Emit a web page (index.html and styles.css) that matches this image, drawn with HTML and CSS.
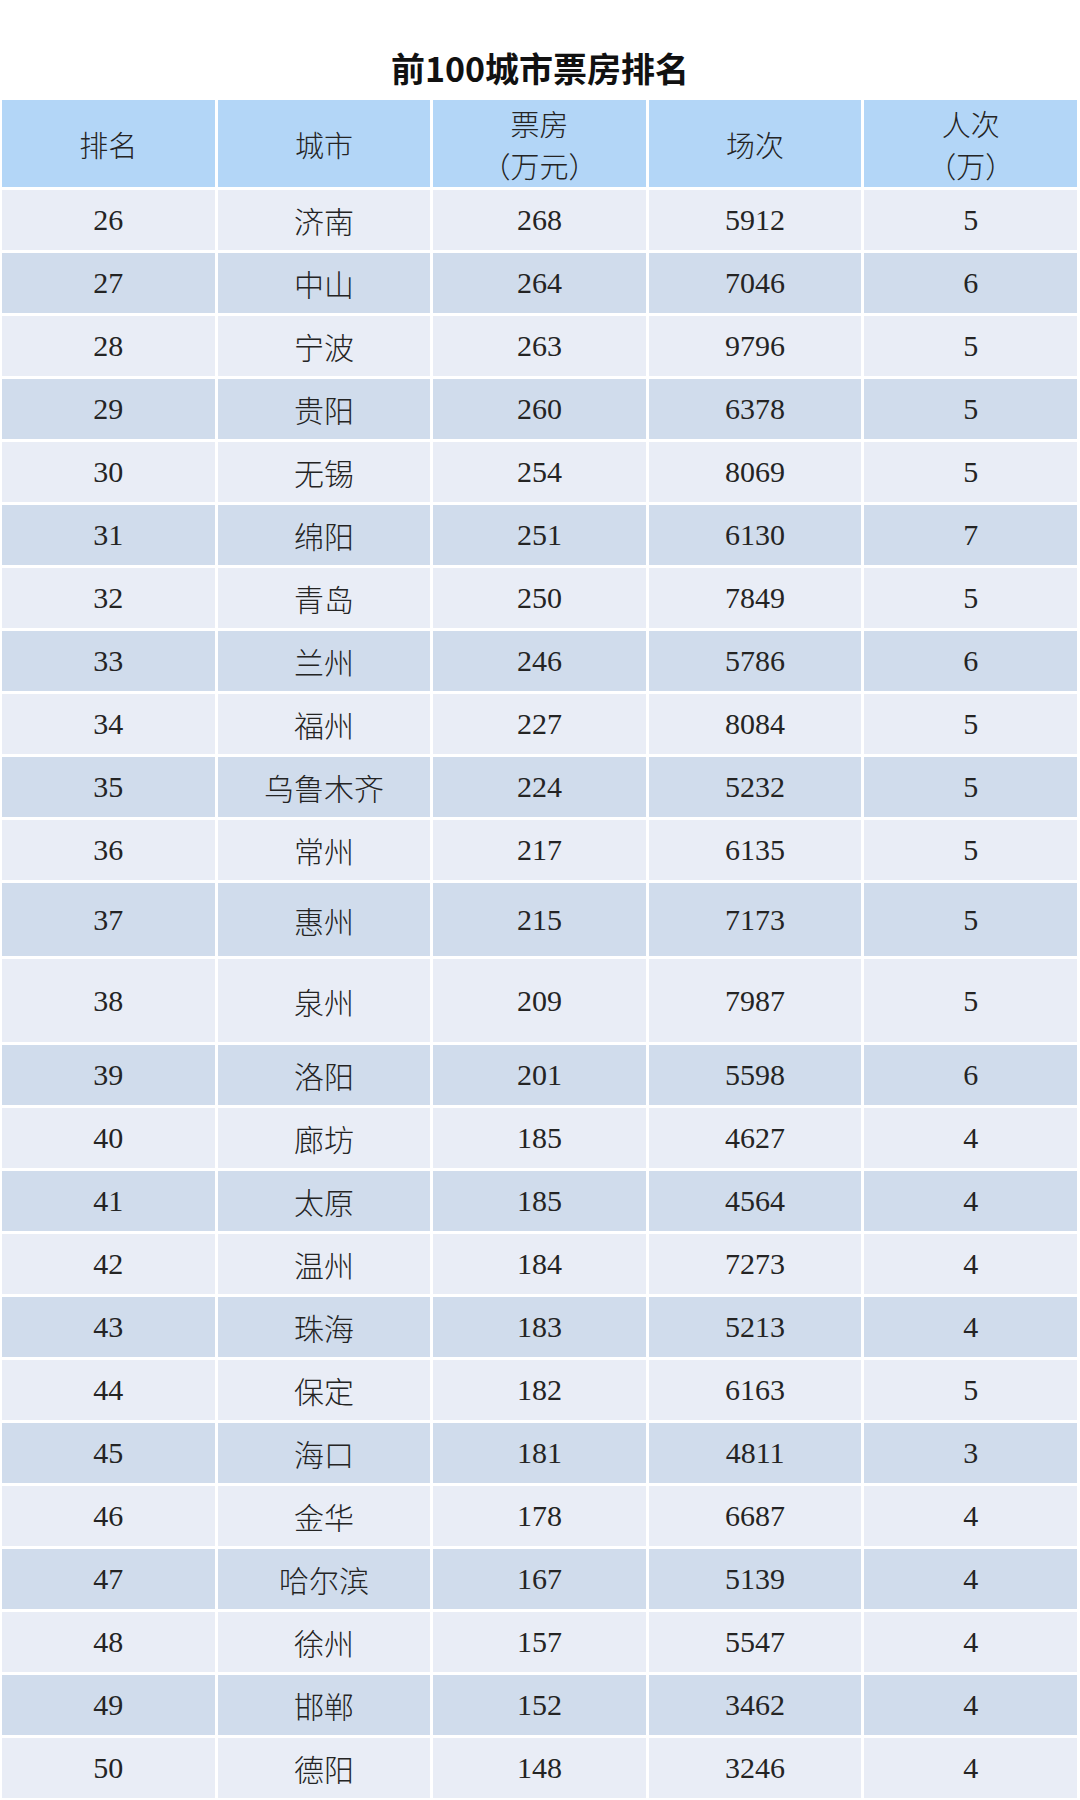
FILE: index.html
```html
<!DOCTYPE html>
<html lang="zh-CN">
<head>
<meta charset="utf-8">
<title>前100城市票房排名</title>
<link rel="stylesheet" href="styles.css">
</head>
<body>
<h1 class="title">前100城市票房排名</h1>
<table class="rank">
  <thead>
    <tr class="head">
      <th>排名</th>
      <th>城市</th>
      <th><span class="line">票房</span><span class="line">（万元）</span></th>
      <th>场次</th>
      <th><span class="line">人次</span><span class="line">（万）</span></th>
    </tr>
  </thead>
  <tbody>
    <tr class="odd"><td>26</td><td class="cn">济南</td><td>268</td><td>5912</td><td>5</td></tr>
    <tr class="even"><td>27</td><td class="cn">中山</td><td>264</td><td>7046</td><td>6</td></tr>
    <tr class="odd"><td>28</td><td class="cn">宁波</td><td>263</td><td>9796</td><td>5</td></tr>
    <tr class="even"><td>29</td><td class="cn">贵阳</td><td>260</td><td>6378</td><td>5</td></tr>
    <tr class="odd"><td>30</td><td class="cn">无锡</td><td>254</td><td>8069</td><td>5</td></tr>
    <tr class="even"><td>31</td><td class="cn">绵阳</td><td>251</td><td>6130</td><td>7</td></tr>
    <tr class="odd"><td>32</td><td class="cn">青岛</td><td>250</td><td>7849</td><td>5</td></tr>
    <tr class="even"><td>33</td><td class="cn">兰州</td><td>246</td><td>5786</td><td>6</td></tr>
    <tr class="odd"><td>34</td><td class="cn">福州</td><td>227</td><td>8084</td><td>5</td></tr>
    <tr class="even"><td>35</td><td class="cn">乌鲁木齐</td><td>224</td><td>5232</td><td>5</td></tr>
    <tr class="odd"><td>36</td><td class="cn">常州</td><td>217</td><td>6135</td><td>5</td></tr>
    <tr class="even tall"><td>37</td><td class="cn">惠州</td><td>215</td><td>7173</td><td>5</td></tr>
    <tr class="odd taller"><td>38</td><td class="cn">泉州</td><td>209</td><td>7987</td><td>5</td></tr>
    <tr class="even"><td>39</td><td class="cn">洛阳</td><td>201</td><td>5598</td><td>6</td></tr>
    <tr class="odd"><td>40</td><td class="cn">廊坊</td><td>185</td><td>4627</td><td>4</td></tr>
    <tr class="even"><td>41</td><td class="cn">太原</td><td>185</td><td>4564</td><td>4</td></tr>
    <tr class="odd"><td>42</td><td class="cn">温州</td><td>184</td><td>7273</td><td>4</td></tr>
    <tr class="even"><td>43</td><td class="cn">珠海</td><td>183</td><td>5213</td><td>4</td></tr>
    <tr class="odd"><td>44</td><td class="cn">保定</td><td>182</td><td>6163</td><td>5</td></tr>
    <tr class="even"><td>45</td><td class="cn">海口</td><td>181</td><td>4811</td><td>3</td></tr>
    <tr class="odd"><td>46</td><td class="cn">金华</td><td>178</td><td>6687</td><td>4</td></tr>
    <tr class="even"><td>47</td><td class="cn">哈尔滨</td><td>167</td><td>5139</td><td>4</td></tr>
    <tr class="odd"><td>48</td><td class="cn">徐州</td><td>157</td><td>5547</td><td>4</td></tr>
    <tr class="even"><td>49</td><td class="cn">邯郸</td><td>152</td><td>3462</td><td>4</td></tr>
    <tr class="odd"><td>50</td><td class="cn">德阳</td><td>148</td><td>3246</td><td>4</td></tr>
  </tbody>
</table>
</body>
</html>
```

FILE: styles.css
```css
html, body {
  margin: 0;
  padding: 0;
  background: #ffffff;
}

body {
  width: 1080px;
  overflow: hidden;
}

.title {
  margin: 0;
  padding-top: 51px;
  height: 46px;
  font-family: "Noto Sans CJK SC", "Noto Sans", sans-serif;
  font-weight: 700;
  font-size: 34px;
  line-height: 34px;
  text-align: center;
  color: #111111;
}

.rank {
  margin-left: -1px;
  width: 1081px;
  border-collapse: separate;
  border-spacing: 3px;
  table-layout: fixed;
  font-family: "Liberation Serif", "Noto Sans CJK SC", serif;
  font-weight: 400;
  font-size: 30px;
  color: #242424;
}

.rank th,
.rank td {
  padding: 0;
  text-align: center;
  vertical-align: middle;
}

.rank th {
  font-family: "Noto Sans CJK SC", serif;
  font-weight: 300;
  font-size: 29px;
  line-height: 42px;
  background: #b3d6f7;
}

.line {
  display: block;
  line-height: 42px;
}

.head {
  height: 87px;
}

.rank td {
  height: 60px;
  line-height: 30px;
}

.rank .cn {
  font-family: "Noto Sans CJK SC", serif;
  font-weight: 300;
}

.odd td {
  background: #e9edf6;
}

.even td {
  background: #d0dcec;
}

.tall td {
  height: 73px;
}

.taller td {
  height: 83px;
}
```
